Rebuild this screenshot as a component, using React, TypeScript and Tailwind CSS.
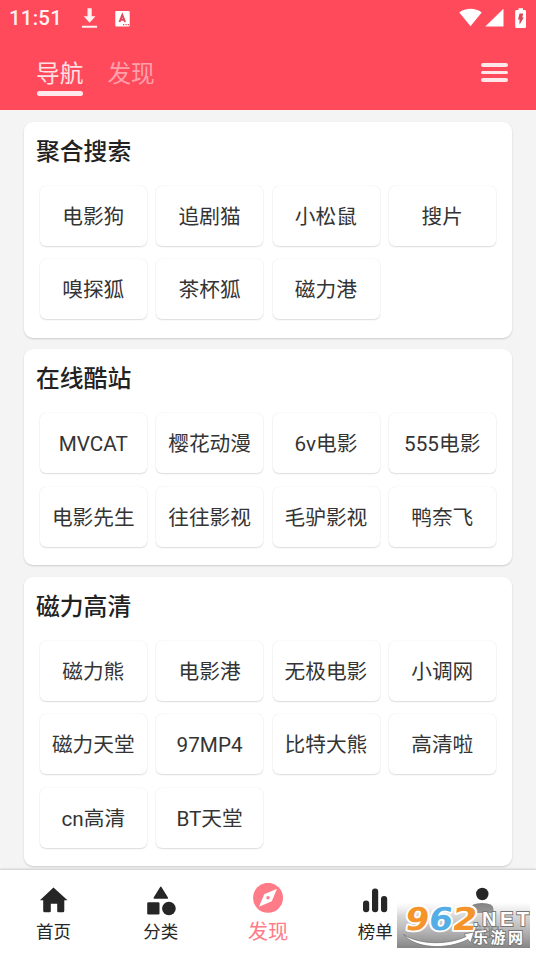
import React from "react";

const sections = [
  { title: "聚合搜索", items: ["电影狗", "追剧猫", "小松鼠", "搜片", "嗅探狐", "茶杯狐", "磁力港"] },
  { title: "在线酷站", items: ["MVCAT", "樱花动漫", "6v电影", "555电影", "电影先生", "往往影视", "毛驴影视", "鸭奈飞"] },
  {
    title: "磁力高清",
    items: ["磁力熊", "电影港", "无极电影", "小调网", "磁力天堂", "97MP4", "比特大熊", "高清啦", "cn高清", "BT天堂"],
  },
];

function StatusBar() {
  return (
    <div className="flex h-9 items-center pl-[9px] pr-[9px] text-[#fff0f2]">
      <span className="w-[54px] whitespace-nowrap text-[20.500px] leading-9 tracking-[0.2px] font-medium">11:51</span>
      <svg className="ml-[18px]" width="18" height="22" viewBox="0 0 18 22" fill="currentColor">
        <path d="M6.500 1.200h4.200v8H14.500L8.600 15.700 2.700 9.200h3.800zM.9 18.700h15.200v2.100H.9z" />
      </svg>
      <svg className="ml-4" width="16" height="17" viewBox="0 0 16 17">
        <rect x=".3" y=".9" width="14.400" height="15.600" rx="1" fill="white" />
        <path d="M4.500 12 7.300 4.900 10.100 12M5.300 9.700h4" fill="none" stroke="#e0485a" strokeWidth="1.900" />
        <path d="M8 14h1.300v1.300H8zM10.400 14h1.300v1.300h-1.300zM12.700 14H14v1.300h-1.300z" fill="#f04b5c" />
      </svg>
      <div className="ml-auto flex items-center text-white">
        <svg width="24" height="20" viewBox="0 0 24 20" fill="currentColor">
          <path d="M.3 4.400C6.500-.5 16.500-.5 22.700 4.400L11.500 18.300z" />
        </svg>
        <svg className="ml-[2px]" width="19" height="20" viewBox="0 0 19 20" fill="currentColor">
          <path d="M18.500.8v17.700H.3z" />
        </svg>
        <svg className="ml-[11px]" width="12" height="21" viewBox="0 0 12 21">
          <path d="M3.500.2h4.500v1.900h1.700q1.300 0 1.300 1.300v15.400q0 1.300-1.300 1.300H1.500Q.2 20.100.2 18.800V3.400q0-1.300 1.300-1.300h2z" fill="white" />
          <path d="M4.500 5.500h3.700L7.300 9.500h1.500L4.500 16.800V11.400H3z" fill="#d8485a" />
        </svg>
      </div>
    </div>
  );
}

function Header() {
  return (
    <header className="h-[110px] shrink-0 bg-[#ff4a5c]">
      <StatusBar />
      <div className="flex h-[74px] items-start pl-9 pr-7">
        <div className="flex flex-col items-center pt-[21px] text-[23.700px] leading-[34px] text-[#ffe0e4]">
          <span>导航</span>
          <span className="h-[5px] w-[46px] rounded-full bg-[#ffe9ec]" />
        </div>
        <span className="ml-6 pt-[21px] text-[23.700px] leading-[34px] text-[#ffa1ab]">发现</span>
        <div className="ml-auto mt-[27px] flex w-[27px] flex-col gap-[4px]">
          <span className="h-[3.500px] rounded-sm bg-[#ffe6e9]" />
          <span className="h-[3.500px] rounded-sm bg-[#ffe6e9]" />
          <span className="h-[3.500px] rounded-sm bg-[#ffe6e9]" />
        </div>
      </div>
    </header>
  );
}

function Section({ title, items }: { title: string; items: string[] }) {
  return (
    <section className="rounded-[9px] bg-white px-4 pb-[18px] shadow-[0_1px_2px_rgba(0,0,0,0.17)]">
      <h2 className="-ml-1 h-[64px] pt-[12px] text-[23.800px] font-medium leading-9 text-[#222]">{title}</h2>
      <div className="grid grid-cols-4 gap-x-[9.300px] gap-y-[13.200px]">
        {items.map((item) => (
          <div
            key={item}
            className="flex h-[60px] items-center justify-center whitespace-nowrap rounded-[6px] bg-white pr-[0.500px] pt-[3px] text-[20.700px] text-[#343434] mb-[0.300px] shadow-[0_1px_1.500px_rgba(0,0,0,0.12),0_0_1.500px_rgba(0,0,0,0.1)]"
          >
            {item}
          </div>
        ))}
      </div>
    </section>
  );
}

function HomeIcon() {
  return (
    <svg width="30" height="28" viewBox="0 0 30 28" fill="currentColor">
      <path d="M14.500.500 28.500 13.200H25.300V23.700q0 1.600-1.600 1.600h-4.200q-1.300 0-1.300-1.300V16.700h-6.400V24q0 1.300-1.300 1.300H5.800q-1.600 0-1.600-1.600V13.200H.9z" />
    </svg>
  );
}

function ShapesIcon() {
  return (
    <svg width="30" height="30" viewBox="0 0 30 30" fill="currentColor">
      <path d="M14.800 1.300 21.300 12H8.300z" stroke="currentColor" strokeWidth="1.500" strokeLinejoin="round" />
      <rect x="1.200" y="16.300" width="12.300" height="12.300" rx="1.300" />
      <circle cx="22.900" cy="22.500" r="6.800" />
    </svg>
  );
}

function CompassIcon() {
  return (
    <svg width="30" height="30" viewBox="0 0 30 30">
      <circle cx="15" cy="14.800" r="15" fill="#ff7b87" />
      <path d="M24 5.800 18.800 18.300 6 23.800 11.200 11.300z" fill="white" />
      <circle cx="15" cy="14.800" r="1.700" fill="#ff7b87" />
    </svg>
  );
}

function ChartIcon() {
  return (
    <svg width="26" height="26" viewBox="0 0 26 26" fill="currentColor">
      <rect x="1" y="12.500" width="6.200" height="11.800" rx="3" />
      <rect x="10" y=".5" width="6.200" height="23.800" rx="3" />
      <rect x="19" y="8" width="6.200" height="16.300" rx="3" />
    </svg>
  );
}

function PersonIcon() {
  return (
    <svg width="28" height="28" viewBox="0 0 28 28" fill="currentColor">
      <circle cx="14.300" cy="7" r="6.200" />
      <path d="M2.500 26v-4Q2.500 16 14 16t11.500 6v4z" />
    </svg>
  );
}

const tabs = [
  { label: "首页", icon: <HomeIcon /> },
  { label: "分类", icon: <ShapesIcon /> },
  { label: "发现", icon: <CompassIcon />, active: true },
  { label: "榜单", icon: <ChartIcon /> },
  { label: "我的", icon: <PersonIcon /> },
];

function Watermark() {
  return (
    <svg className="absolute bottom-[6px] right-[6px] overflow-visible" width="133" height="52" viewBox="0 -8 133 52">
      <defs>
        <linearGradient id="shade" x1="0" y1="0" x2="0" y2="1">
          <stop offset="0" stopColor="#fff" stopOpacity="0.400" />
          <stop offset="0.300" stopColor="#c6c6c6" stopOpacity="0.700" />
          <stop offset="1" stopColor="#777" stopOpacity="0.900" />
        </linearGradient>
      </defs>
      <rect y="-2" width="133" height="46" fill="url(#shade)" />
      <path d="M6.500 30.500C22 40.500 50 41.500 69 32.500l-2-2.500L77 28l-3.500 11-2.500-3.500C49 46.500 18 44.500 6.500 30.500z" fill="white" stroke="#777" strokeWidth=".8" />
      <g
        transform="translate(0 26.200) skewX(-8)"
        fontFamily="DejaVu Sans, sans-serif"
        fontWeight="bold"
        fontSize="31.500"
        strokeLinejoin="round"
      >
        <g stroke="white" strokeWidth="3.600" paintOrder="stroke">
          <text x="7" y="0" textLength="24" lengthAdjust="spacingAndGlyphs" fill="#f4942a">9</text>
          <text x="30.500" y="0" textLength="24" lengthAdjust="spacingAndGlyphs" fill="#54aee5">6</text>
          <text x="54" y="0" textLength="25" lengthAdjust="spacingAndGlyphs" fill="#f4942a">2</text>
        </g>
      </g>
      <g fill="white" stroke="#777" strokeWidth="1.800" paintOrder="stroke" fontWeight="bold">
        <text x="76" y="21.500" fontFamily="Liberation Sans, sans-serif" fontSize="20" textLength="56" lengthAdjust="spacing">.NET</text>
        <text x="76" y="39" fontFamily="Noto Sans CJK SC, sans-serif" fontSize="15" letterSpacing="2.500">乐游网</text>
      </g>
    </svg>
  );
}

export default function App() {
  return (
    <div className="relative flex h-[954px] w-[536px] flex-col overflow-hidden bg-[#f4f4f4] font-[Roboto,'Noto_Sans_CJK_SC',sans-serif]">
      <Header />
      <main className="flex min-h-0 flex-1 flex-col gap-[11.700px] overflow-hidden px-6 pt-[12px]">
        {sections.map((section) => (
          <Section key={section.title} {...section} />
        ))}
      </main>
      <nav className="grid h-[84px] shrink-0 grid-cols-5 bg-white shadow-[0_-1px_2px_rgba(0,0,0,0.16)]">
        {tabs.map((tab) => (
          <div key={tab.label} className={`flex flex-col items-center ${tab.active ? "text-[#ff7b87]" : "text-[#262626]"}`}>
            <div className={`flex items-center justify-center ${tab.active ? "mt-[13px] h-[30px]" : "mt-[16px] h-[30px]"}`}>
              {tab.icon}
            </div>
            <span className={tab.active ? "mt-[3px] text-[20.300px] leading-8" : "mt-[2px] text-[17.500px] leading-7"}>{tab.label}</span>
          </div>
        ))}
      </nav>
      <Watermark />
    </div>
  );
}
